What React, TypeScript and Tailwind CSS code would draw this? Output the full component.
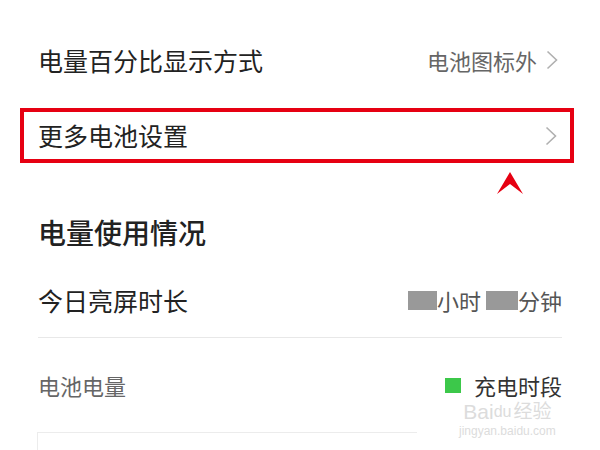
import React from 'react';

const font = { fontFamily: '"Noto Sans CJK SC", "Noto Sans", sans-serif' };

function Chevron() {
  return (
    <svg width="12" height="20" viewBox="0 0 12 20" fill="none">
      <polyline points="1.5,1.5 10.5,10 1.5,18.5" stroke="#b0b0b0" strokeWidth="1.6" strokeLinejoin="miter" />
    </svg>
  );
}

function Caret() {
  return (
    <svg width="26" height="22" viewBox="0 0 26 22">
      <polygon points="13,0 26,22 13,12 0,22" fill="#e60012" />
    </svg>
  );
}

export default function App() {
  return (
    <div className="relative w-[600px] h-[450px] overflow-hidden bg-white text-[#222]" style={font}>
      <div className="flex flex-col pt-[30px]">
        {/* 电量百分比显示方式 */}
        <div className="h-[60px] flex items-center justify-between pl-[38px] pr-[42px]">
          <span className="text-[25px] leading-none">电量百分比显示方式</span>
          <div className="flex items-center gap-[9px]">
            <span className="text-[22px] leading-none text-[#666]">电池图标外</span>
            <Chevron />
          </div>
        </div>

        {/* 更多电池设置 - highlighted */}
        <div className="mt-[18px] mx-[20px] w-[554px] h-[55px] border-4 border-[#e60012] flex items-center justify-between pl-[14px] pr-[13px]">
          <span className="text-[25px] leading-none">更多电池设置</span>
          <Chevron />
        </div>

        <div className="mt-[9px] h-[21px] flex justify-end pr-[77px]">
          <Caret />
        </div>

        {/* 电量使用情况 */}
        <div className="mt-[20px] h-[38px] flex items-center pl-[38px]">
          <span className="text-[28px] leading-none font-medium">电量使用情况</span>
        </div>

        <div className="mt-[19px] h-[60px] flex items-center justify-between pl-[38px] pr-[38px]">
          <span className="text-[25px] leading-none">今日亮屏时长</span>
          <div className="flex items-center text-[22px] leading-none text-[#555]">
            <span className="w-[29px] h-[19px] bg-[#999]" />
            <span>小时</span>
            <span className="ml-[5px] w-[32px] h-[19px] bg-[#999]" />
            <span>分钟</span>
          </div>
        </div>

        <div className="mt-[7px] mx-[38px] h-px bg-[#e8e8e8]" />

        <div className="mt-[17px] h-[60px] flex items-center justify-between pl-[38px] pr-[38px]">
          <span className="text-[22px] leading-none text-[#666]">电池电量</span>
          <div className="flex items-center gap-[13px]">
            <span className="w-[16px] h-[15px] bg-[#3cc84a]" />
            <span className="text-[22px] leading-none text-[#333]">充电时段</span>
          </div>
        </div>

        <div className="mt-[17px] ml-[37px] w-[380px] h-[40px] border-t border-l border-[#ececec]" />
      </div>

      {/* watermark */}
      <div className="absolute left-[459px] top-[399px] flex flex-col items-center text-[#dcdcdc]">
        <div className="flex items-end h-[22px] leading-[18px]" style={{ fontFamily: '"Liberation Sans", "Noto Sans CJK SC", sans-serif' }}>
          <span className="text-[21px]">Bai</span>
          <span className="text-[16px]">du</span>
          <span className="ml-[2px] text-[19px]">经验</span>
        </div>
        <span className="mt-[4px] text-[12px] leading-none" style={{ fontFamily: '"Liberation Sans", sans-serif' }}>jingyan.baidu.com</span>
      </div>
    </div>
  );
}
